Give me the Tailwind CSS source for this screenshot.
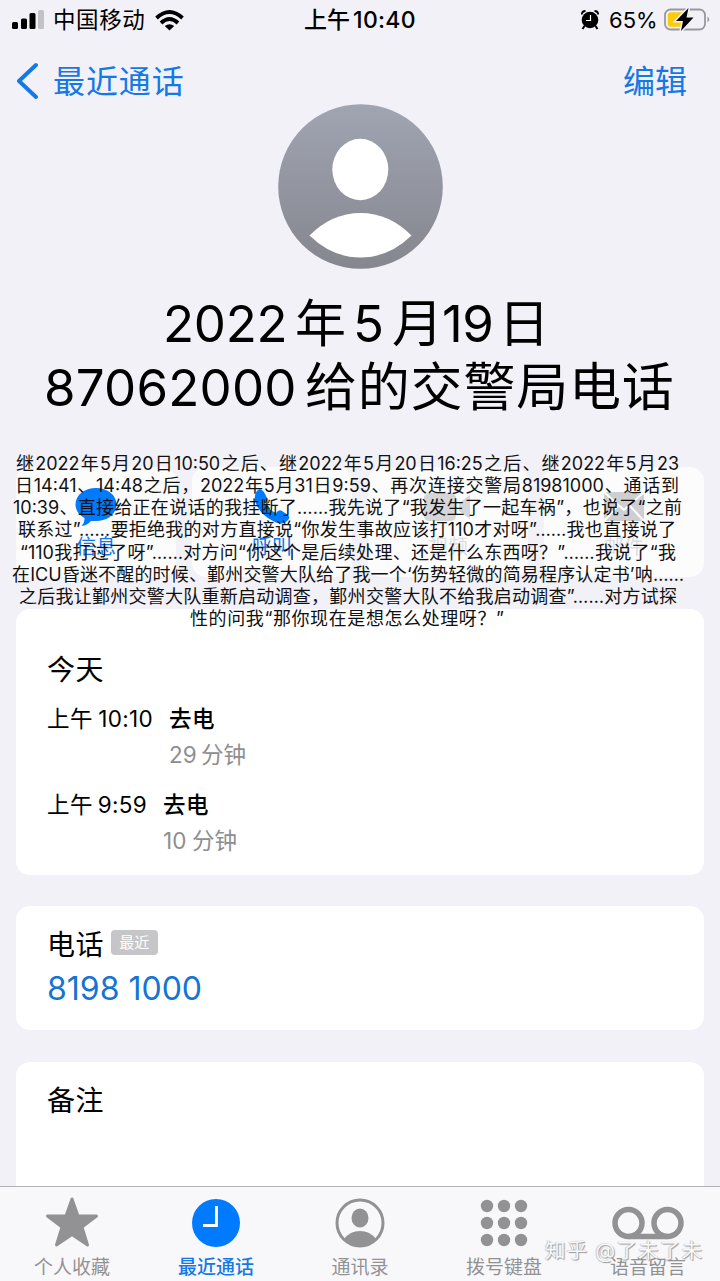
<!DOCTYPE html>
<html lang="zh-CN">
<head>
<meta charset="utf-8">
<title>最近通话</title>
<script src="https://cdn.jsdelivr.net/npm/@tailwindcss/browser@4"></script>
</head>
<body class="bg-[#f2f1f8] font-['Inter','Noto_Sans_CJK_SC',sans-serif] text-black">
<main class="w-[720px] h-[1281px] overflow-hidden flex flex-col whitespace-nowrap">
  <header class="h-10 shrink-0 grid grid-cols-3 items-center text-[22px] leading-10">
    <div class="flex items-center pl-3">
      <svg class="w-8 h-5 shrink-0" viewBox="0 0 32 20"><rect x="0" y="12" width="6" height="7" rx="1.5"/><rect x="9" y="8.500" width="6" height="10.500" rx="1.500"/><rect x="17.500" y="3" width="6" height="16" rx="1.500"/><rect x="26" y="0" width="6" height="19" rx="1.500" fill="#c3c3c7"/></svg>
      <span class="ml-[9px] w-[92px] text-[22.5px] tracking-[0.6px]">中国移动</span>
      <svg class="ml-[10px] w-[29px] h-[21px] shrink-0" viewBox="0 0 29 21" fill="none" stroke="#000" stroke-width="3.800"><path d="M1.500 8Q14.500 -4 27.500 8"/><path d="M6 13Q14.500 5 23 13"/><path d="M14.500 20.500L9.800 16Q14.500 12.500 19.200 16Z" fill="#000" stroke="none"/></svg>
    </div>
    <div class="flex justify-center gap-[3px] font-medium text-[23px]"><span>上午</span><span class="tracking-[0.3px]">10:40</span></div>
    <div class="flex items-center justify-end pr-[10px]">
      <svg class="w-[18px] h-[20px] shrink-0" viewBox="0 0 18 20"><circle cx="9" cy="10" r="8.300"/><path d="M.8 4.500Q1 1 4.500 1M17.200 4.500Q17 1 13.500 1" fill="none" stroke="#000" stroke-width="1.800"/><path d="M3.500 16L1.500 19M14.500 16L16.500 19" stroke="#000" stroke-width="2"/><path d="M9.500 5V10.500H5" fill="none" stroke="#fff" stroke-width="1.200"/></svg>
      <span class="ml-[10px] w-[49px] text-[22px]">65%</span>
      <svg class="ml-[6px] -mt-[2px] w-[46px] h-[25px] shrink-0" viewBox="0 0 46 25"><rect x="1" y="2.500" width="40" height="20" rx="5.500" fill="none" stroke="#98989d" stroke-width="1.800"/><rect x="3.800" y="5.200" width="21" height="14.600" rx="3" fill="#fccb0a"/><path d="M43.500 9.500Q47 12.500 43.500 15.500Z" fill="#98989d"/><path d="M24.500 1L12 14H19L17 24L29.500 10.500H22.500Z" stroke="#f2f1f8" stroke-width="3" paint-order="stroke"/></svg>
    </div>
  </header>

  <nav class="h-16 shrink-0 flex items-start justify-between pl-4 pr-[33px] text-[#1478e6] text-[32px] leading-[84px]">
    <div class="flex items-center h-[82px]">
      <svg class="w-[22px] h-[38px]" viewBox="0 0 22 38" fill="none" stroke="#1478e6" stroke-width="4" stroke-linecap="round" stroke-linejoin="round"><path d="M20 3L3 19L20 35"/></svg>
      <span class="ml-[15px] mt-[2px] tracking-[0.9px]">最近通话</span>
    </div>
    <span class="h-[82px]">编辑</span>
  </nav>

  <svg class="self-center w-[165px] h-[165px] shrink-0" viewBox="0 0 165 165"><defs><linearGradient id="sky" x2="0" y2="1"><stop stop-color="#a0a5b2"/><stop offset="1" stop-color="#85868e"/></linearGradient></defs><circle cx="82.500" cy="82.500" r="82.300" fill="url(#sky)"/><ellipse cx="82.300" cy="65.500" rx="28" ry="30.700" fill="#fff"/><path d="M31.500 131.500Q54 109 82.500 109Q111 109 133.500 131.500Q111 153.500 82.500 153.500Q54 153.500 31.500 131.500Z" fill="#fff"/></svg>

  <h1 class="mt-[23px] h-[128px] shrink-0 flex flex-col text-[51px] leading-[64px]">
    <span class="ml-[163px] flex"><span class="w-[125px] tracking-[-0.3px]">2022</span><span class="ml-[7px]">年</span><span class="ml-[7px]">5</span><span class="ml-[8px]">月</span><span class="-ml-[1px] tracking-[-0.5px]">19</span><span class="ml-[5px]">日</span></span>
    <span class="ml-[44px] flex"><span class="w-[261px] tracking-[0.200px]">87062000</span><span class="text-[52px] tracking-[0.8px]">给的交警局电话</span></span>
  </h1>

  <section class="relative mt-[47px] mx-4 h-[110px] shrink-0">
    <div class="grid grid-cols-4 gap-4 h-full text-[20px] leading-7 text-center text-[#1478e6]">
      <div class="bg-white/75 rounded-[14px] flex flex-col items-center pt-5"><svg class="w-[42px] h-[40px]" viewBox="0 0 42 40" fill="#007aff"><path d="M21 1C32.500 1 41.500 8 41.500 17.500S32.500 34 21 34H16Q12 38.500 6.500 39Q10 35 9.500 31Q.5 26 .5 17.500C.5 8 9.500 1 21 1Z"/></svg><span class="mt-[6px]">信息</span></div>
      <div class="bg-white/75 rounded-[14px] flex flex-col items-center pt-5"><svg class="w-[36px] h-[40px]" viewBox="0 0 36 40" fill="#007aff"><path d="M4 3Q7 1 10 5L13 11Q14 14 11 17Q15 23 22 26Q25 22 28 24L34 28Q37 31 33 34Q28 39 19 34Q5 27 1 14Q0 6 4 3Z"/></svg><span class="mt-[6px]">呼叫</span></div>
      <div class="bg-white/75 rounded-[14px] flex flex-col items-center pt-5 text-[#dddde1]"><svg class="w-[48px] h-[40px]" viewBox="0 0 48 40" fill="#d6d6d9"><rect y="6" width="32" height="28" rx="5"/><path d="M35 16L46 8V32L35 24Z"/></svg><span class="mt-[6px]">视频</span></div>
      <div class="bg-white/75 rounded-[14px] flex flex-col items-center pt-5 text-[#dddde1]"><svg class="w-[42px] h-[40px]" viewBox="0 0 42 40"><rect x="1" y="5" width="40" height="29" rx="4" fill="#cfcfd2"/><path d="M2 6L21 23L40 6M2 33L15 19M40 33L27 19" fill="none" stroke="#fff" stroke-width="2"/></svg><span class="mt-[6px]">邮件</span></div>
    </div>
    <div class="absolute top-[-14px] left-[-16px] w-[720px] flex flex-col text-[18px] leading-[22.150px] text-[#111] [text-align-last:justify]">
      <span class="ml-[16px] w-[663px]">继2022年5月20日10:50之后、继2022年5月20日16:25之后、继2022年5月23</span>
      <span class="ml-[15px] w-[664px]">日14:41、14:48之后，2022年5月31日9:59、再次连接交警局81981000、通话到</span>
      <span class="ml-[13px] w-[669px]">10:39、直接给正在说话的我挂断了……我先说了“我发生了一起车祸”，也说了“之前</span>
      <span class="ml-[18px] w-[658px]">联系过”……要拒绝我的对方直接说“你发生事故应该打110才对呀”……我也直接说了</span>
      <span class="ml-[20px] w-[656px]">“110我打过了呀”……对方问“你这个是后续处理、还是什么东西呀？”……我说了“我</span>
      <span class="ml-[12px] w-[672px]">在ICU昏迷不醒的时候、鄞州交警大队给了我一个‘伤势轻微的简易程序认定书’呐……</span>
      <span class="ml-[19px] w-[658px]">之后我让鄞州交警大队重新启动调查，鄞州交警大队不给我启动调查”……对方试探</span>
      <span class="ml-[190px] w-[314px]">性的问我“那你现在是想怎么处理呀？”</span>
    </div>
  </section>

  <section class="mt-8 mx-4 h-[266px] shrink-0 bg-white rounded-[14px] pl-[31px] text-[22.5px]">
    <h2 class="pt-[41px] text-[28px] leading-[40px] tracking-[0.4px]">今天</h2>
    <div class="mt-[11px] flex leading-9"><span class="w-[106px] flex justify-between"><span class="tracking-[0.5px]">上午</span><span class="tracking-[0.3px]">10:10</span></span><div class="ml-[16px]"><div class="font-medium tracking-[0.5px]">去电</div><div class="text-[#8e8e91] w-[77px] flex justify-between"><span>29</span><span>分钟</span></div></div></div>
    <div class="mt-[14px] flex leading-9"><span class="w-[100px] flex justify-between"><span class="tracking-[0.5px]">上午</span><span class="tracking-[0.3px]">9:59</span></span><div class="ml-[16px]"><div class="font-medium tracking-[0.5px]">去电</div><div class="text-[#8e8e91] w-[74px] flex justify-between"><span>10</span><span>分钟</span></div></div></div>
  </section>

  <section class="mt-[31px] mx-4 h-[124px] shrink-0 bg-white rounded-[14px] pl-[31px]">
    <div class="pt-[19px] flex items-center text-[28px] leading-[40px]"><span class="tracking-[0.4px]">电话</span><span class="ml-[7px] -mt-[6px] w-[47px] h-[25px] rounded-[4px] bg-[#c6c6c8] text-white text-center text-[15px] leading-[25px]">最近</span></div>
    <div class="mt-[4px] text-[32px] leading-10 text-[#1474d4]"><span class="block w-[155px] whitespace-nowrap [text-align-last:justify]">8198 1000</span></div>
  </section>

  <section class="mt-8 mx-4 h-[124px] shrink-0 bg-white rounded-t-[14px] pl-[31px] pt-[19px] text-[28px] leading-[40px] tracking-[0.4px]">备注</section>

  <footer class="relative h-[95px] shrink-0 bg-[#f8f8fa] border-t border-[#b2b2b5] grid grid-cols-5 text-[#929295] text-[19px] leading-7">
    <div class="flex flex-col items-center pt-2"><svg class="w-[54px] h-[56px]" viewBox="0 0 54 56" fill="#929295" stroke="#929295" stroke-width="3" stroke-linejoin="round"><path d="M27 4L33 21H51.500L37 32L42.500 50L27 39.500L11.500 50L17 32L2.500 21H21Z"/></svg><span class="mt-[3px]">个人收藏</span></div>
    <div class="flex flex-col items-center pt-2 text-[#1478e6] font-medium"><svg class="w-[54px] h-[56px]" viewBox="0 0 54 56"><circle cx="27" cy="28" r="24" fill="#007aff"/><path d="M27.500 11V30.500H14" fill="none" stroke="#fff" stroke-width="2.800"/></svg><span class="mt-[3px]">最近通话</span></div>
    <div class="flex flex-col items-center pt-2"><svg class="w-[54px] h-[56px]" viewBox="0 0 54 56" fill="#929295"><circle cx="27" cy="28" r="23" fill="none" stroke="#929295" stroke-width="3"/><ellipse cx="27" cy="23" rx="8.500" ry="9.500"/><path d="M11 44Q17 36 27 36T43 44Q36 51 27 51T11 44Z"/></svg><span class="mt-[3px]">通讯录</span></div>
    <div class="flex flex-col items-center pt-2"><svg class="w-[54px] h-[56px]" viewBox="0 0 54 56" fill="#929295"><circle cx="10" cy="11" r="6.200"/><circle cx="27" cy="11" r="6.200"/><circle cx="44" cy="11" r="6.200"/><circle cx="10" cy="28" r="6.200"/><circle cx="27" cy="28" r="6.200"/><circle cx="44" cy="28" r="6.200"/><circle cx="10" cy="45" r="6.200"/><circle cx="27" cy="45" r="6.200"/><circle cx="44" cy="45" r="6.200"/></svg><span class="mt-[3px]">拨号键盘</span></div>
    <div class="flex flex-col items-center pt-2"><svg class="w-[74px] h-[56px]" viewBox="0 0 74 56" fill="none" stroke="#929295" stroke-width="5.500"><circle cx="17.500" cy="28" r="13.500"/><circle cx="56.500" cy="28" r="13.500"/><path d="M17.500 41.500H56.500"/></svg><span class="mt-[3px]">语音留言</span></div>
    <div class="absolute left-[545px] top-[48px] w-[157px] text-[20.5px] leading-8 text-[#f8f8fa] [text-align-last:justify] [text-shadow:1px_1px_1px_#99999c,-0.5px_-0.5px_1px_#a8a8ac]">知乎 @了未了未</div>
  </footer>
</main>
</body>
</html>
